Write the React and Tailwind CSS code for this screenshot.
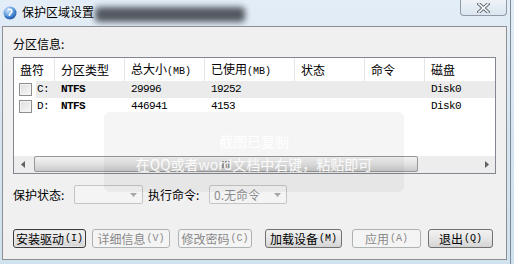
import React from 'react';

const cjk = "[font-family:'Noto_Sans_CJK_SC','Noto_Sans',sans-serif]";
const mono = "[font-family:'Liberation_Mono','Noto_Sans_CJK_SC',monospace]";

const cols = [
  { label: '盘符', w: 'w-[41px]' },
  { label: '分区类型', w: 'w-[70px]' },
  { label: '总大小(MB)', w: 'w-[80px]' },
  { label: '已使用(MB)', w: 'w-[90px]' },
  { label: '状态', w: 'w-[70px]' },
  { label: '命令', w: 'w-[60px]' },
  { label: '磁盘', w: 'flex-1' },
];

const rows = [
  { drive: 'C:', type: 'NTFS', total: '29996', used: '19252', disk: 'Disk0', sel: true },
  { drive: 'D:', type: 'NTFS', total: '446941', used: '4153', disk: 'Disk0', sel: false },
];

const HeadLabel = ({ text }) => {
  const m = text.match(/^(.*?)(\(MB\))$/);
  if (!m) return <span>{text}</span>;
  return (
    <span>
      {m[1]}
      <span className={`${mono} text-[10px]`}>{m[2]}</span>
    </span>
  );
};

const Btn = ({ cn, key2, disabled, focus }) => (
  <div
    className={`h-[19px] flex items-center justify-center rounded-[3px] border text-[12px] leading-none ${
      disabled
        ? 'border-[#adb2b5] bg-[#f4f4f4] text-[#8a8a8a]'
        : focus
        ? 'border-[#3c3c3c] bg-gradient-to-b from-[#f2f2f2] via-[#e6e6e6] to-[#d4d4d4] text-black shadow-[inset_0_0_0_1px_#e8e8e8]'
        : 'border-[#707070] bg-gradient-to-b from-[#f2f2f2] via-[#e6e6e6] to-[#d4d4d4] text-black'
    }`}
  >
    <span className={cjk}>{cn}</span>
    <span className={`${mono} text-[10px] ml-[1px]`}>({key2})</span>
  </div>
);

const Combo = ({ w, text }) => (
  <div className={`${w} h-[19px] border border-[#c5c5c5] rounded-[2px] bg-[#f4f4f4] flex items-center justify-between px-[4px]`}>
    <span className={`${cjk} text-[12px] text-[#8d8d8d] leading-none`}>{text}</span>
    <svg width="7" height="4" viewBox="0 0 7 4" className="mr-[1px]">
      <path d="M0 0 H7 L3.5 4 Z" fill="#a8a8a8" />
    </svg>
  </div>
);

export default function App() {
  return (
    <div className="w-[514px] h-[264px] overflow-hidden relative bg-gradient-to-b from-[#e3edf7] via-[#d6e4f2] to-[#cfe2ee] flex flex-col">
      {/* title bar */}
      <div className="h-[26px] flex items-start shrink-0">
        <svg width="14" height="14" viewBox="0 0 14 14" className="ml-[3px] mt-[6px]">
          <defs>
            <radialGradient id="g" cx="0.35" cy="0.3" r="0.8">
              <stop offset="0" stopColor="#cfe6ff" />
              <stop offset="0.6" stopColor="#4d8fd6" />
              <stop offset="1" stopColor="#1d4f9a" />
            </radialGradient>
          </defs>
          <circle cx="7" cy="7" r="6.5" fill="url(#g)" />
          <path d="M5 3.5 C8.5 2.5 10 5 8 7 L6.5 8.5 L6.5 10" stroke="#fff" strokeWidth="1.6" fill="none" />
          <path d="M2 10 C4 13 9 13 11.5 10" stroke="#2b66b8" strokeWidth="1.2" fill="none" />
        </svg>
        <span className={`${cjk} text-[12px] leading-none mt-[6px] ml-[5px] text-black [text-shadow:0_0_6px_#fff]`}>保护区域设置</span>
        <div className="w-[150px] h-[15px] mt-[7px] ml-[1px] bg-[#3a3f46] blur-[3px] opacity-85 rounded-sm" />
        <div className="flex-1" />
        <div className="w-[47px] h-[16px] border border-t-0 border-[#8f9aa6] rounded-b-[4px] bg-gradient-to-b from-[#eef3f8] to-[#dbe5ef] flex items-center justify-center mr-[7px]">
          <svg width="13" height="10" viewBox="0 0 13 10">
            <path d="M2 1 L11 9 M11 1 L2 9" stroke="#5c6670" strokeWidth="3.4" strokeLinecap="square" />
            <path d="M2 1 L11 9 M11 1 L2 9" stroke="#ffffff" strokeWidth="1.6" strokeLinecap="square" />
          </svg>
        </div>
        <div className="absolute right-[3px] top-0 w-[1px] h-[264px] bg-[#7d8a98]" />
      </div>

      {/* client area */}
      <div className="ml-[2px] w-[505px] h-[234px] border border-[#8e8f8f] bg-[#f0f0f0] flex flex-col pl-[10px] relative">
        <div className={`${cjk} text-[12px] leading-[14px] mt-[10px] text-black`}>分区信息:</div>

        {/* list view */}
        <div className="mt-[6px] w-[483px] h-[117px] border border-[#828790] bg-white flex flex-col">
          <div className="h-[23px] flex shrink-0">
            {cols.map((c, i) => (
              <div
                key={i}
                className={`${c.w} h-full flex items-center px-[6px] ${cjk} text-[12px] text-black ${i < cols.length - 1 ? 'border-r border-[#e5e5e5]' : ''}`}
              >
                <HeadLabel text={c.label} />
              </div>
            ))}
          </div>
          {rows.map((r, i) => (
            <div key={i} className={`h-[17px] flex items-center ${mono} text-[11px] tracking-[-0.6px] text-black`}>
              <div className="w-[41px] h-full flex items-center pl-[5px]">
                <div className="w-[13px] h-[13px] border border-[#8f8f8f] bg-gradient-to-br from-[#dedede] to-[#f8f8f8] shadow-[inset_0_0_0_1px_#f4f4f4] shrink-0" />
                <div className={`h-full flex-1 ml-[4px] flex items-center pl-[1px] ${r.sel ? 'bg-[#ebebeb]' : ''}`}>{r.drive}</div>
              </div>
              <div className={`flex flex-1 h-full items-center ${r.sel ? 'bg-[#ebebeb]' : ''}`}>
                <div className="w-[70px] pl-[6px] font-bold">{r.type}</div>
                <div className="w-[80px] pl-[6px]">{r.total}</div>
                <div className="w-[90px] pl-[6px]">{r.used}</div>
                <div className="w-[70px]" />
                <div className="w-[60px]" />
                <div className="flex-1 pl-[6px]">{r.disk}</div>
              </div>
            </div>
          ))}
          <div className="flex-1" />
          {/* horizontal scrollbar */}
          <div className="h-[17px] flex bg-[#ededed] shrink-0">
            <div className="w-[17px] h-full flex items-center justify-center">
              <svg width="4" height="7" viewBox="0 0 4 7"><path d="M4 0 V7 L0 3.5 Z" fill="#606060" /></svg>
            </div>
            <div className="w-[384px] h-[16px] ml-[3px] border border-[#979797] rounded-[2px] bg-gradient-to-b from-[#f3f3f3] via-[#e2e2e2] to-[#c9c9c9] flex items-center justify-center">
              <svg width="8" height="7" viewBox="0 0 8 7">
                <path d="M1 0 V7 M4 0 V7 M7 0 V7" stroke="#505050" strokeWidth="1" />
              </svg>
            </div>
            <div className="flex-1" />
            <div className="w-[17px] h-full flex items-center justify-center">
              <svg width="4" height="7" viewBox="0 0 4 7"><path d="M0 0 V7 L4 3.5 Z" fill="#606060" /></svg>
            </div>
          </div>
        </div>

        {/* form row */}
        <div className="mt-[11px] h-[19px] flex items-center">
          <span className={`${cjk} text-[12px] text-black w-[61px]`}>保护状态:</span>
          <Combo w="w-[69px]" text="" />
          <span className={`${cjk} text-[12px] text-black ml-[5px] w-[61px]`}>执行命令:</span>
          <Combo w="w-[78px]" text="0.无命令" />
        </div>

        {/* buttons */}
        <div className="mt-[25px] flex items-center">
          <div className="w-[73px]"><Btn cn="安装驱动" key2="I" focus /></div>
          <div className="w-[78px] ml-[6px]"><Btn cn="详细信息" key2="V" disabled /></div>
          <div className="w-[74px] ml-[8px]"><Btn cn="修改密码" key2="C" disabled /></div>
          <div className="w-[77px] ml-[13px]"><Btn cn="加载设备" key2="M" /></div>
          <div className="w-[69px] ml-[10px]"><Btn cn="应用" key2="A" disabled /></div>
          <div className="w-[65px] ml-[7px]"><Btn cn="退出" key2="Q" /></div>
        </div>

        {/* screenshot toast overlay */}
        <div className="absolute left-[101px] top-[85px] w-[300px] h-[80px] rounded-[6px] bg-black/[0.04] flex flex-col items-center pt-[20px]">
          <span className={`${cjk} text-[14px] leading-[18px] text-white`}>截图已复制</span>
          <span className={`${cjk} text-[14px] leading-[18px] text-white/90 mt-[5px]`}>在QQ或者word文档中右键，粘贴即可</span>
        </div>
      </div>
    </div>
  );
}
